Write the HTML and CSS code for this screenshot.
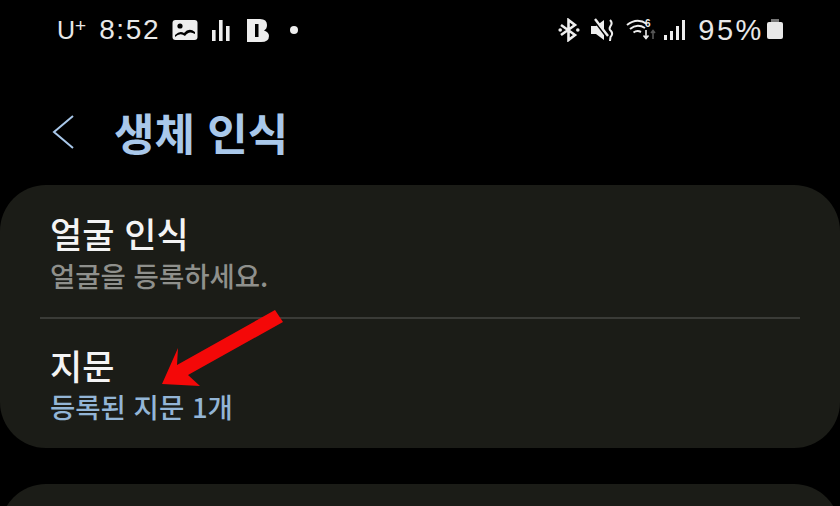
FILE: index.html
```html
<!DOCTYPE html>
<html lang="ko">
<head>
    <meta charset="UTF-8">
    <meta name="viewport" content="width=device-width, initial-scale=1.0">
    <title>생체 인식</title>
    <link rel="stylesheet" href="styles.css">
</head>
<body>

    <!-- Status bar -->
    <div class="status-bar">
        <div class="status-group">
            <span class="carrier">U<sup>+</sup></span>
            <span class="clock">8:52</span>
            <svg class="icon-gallery" width="26" height="22" viewBox="0 0 26 22">
                <rect x="0.5" y="1" width="25" height="20" rx="3" fill="#eee"/>
                <circle cx="8" cy="7" r="2.6" fill="#000"/>
                <path d="M3 18 L3 16 Q8 11 12 14 Q17 8 23 13 L23 15 Q17 11 13 17 Q8 13 3 18 Z" fill="#000"/>
            </svg>
            <svg class="icon-bars" width="18" height="22" viewBox="0 0 18 22">
                <rect x="0" y="11" width="3.6" height="11" fill="#eee"/>
                <rect x="7" y="1" width="3.6" height="21" fill="#eee"/>
                <rect x="14" y="7" width="3.6" height="15" fill="#eee"/>
            </svg>
            <svg class="icon-b" width="22" height="23" viewBox="0 0 22 23">
                <path d="M0 0 H13 Q20 0 20 6 Q20 10 17 11.5 Q22 13 22 17 Q22 23 14 23 H0 Z" fill="#eee"/>
                <rect x="8" y="5" width="3.5" height="13" fill="#000"/>
            </svg>
            <span class="dot"></span>
        </div>
        <div class="status-group">
            <svg class="icon-bt" width="22" height="24" viewBox="0 0 22 24">
                <path d="M3 7 L17 17 L10.5 22 V2 L17 7 L3 17" fill="none" stroke="#eee" stroke-width="2.6"/>
                <circle cx="2.2" cy="12" r="1.8" fill="#eee"/>
                <circle cx="19.8" cy="12" r="1.8" fill="#eee"/>
            </svg>
            <svg class="icon-mute" width="24" height="24" viewBox="0 0 24 24">
                <path d="M0 8 H5 L13 2 V22 L5 16 H0 Z" fill="#eee"/>
                <path d="M2 1 L17 21" stroke="#000" stroke-width="2"/>
                <path d="M4 1 L17 18" stroke="#eee" stroke-width="2.4"/>
                <path d="M19 2 Q22 5 19.5 8 Q17.5 11 20 13 Q22.5 16 19.5 19 L19 23" fill="none" stroke="#eee" stroke-width="2"/>
            </svg>
            <svg class="icon-wifi" width="30" height="24" viewBox="0 0 30 24">
                <path d="M1 7 Q11 -1 21 6" fill="none" stroke="#eee" stroke-width="2"/>
                <path d="M4 11 Q11 5 19 10" fill="none" stroke="#eee" stroke-width="2"/>
                <path d="M7.5 14.5 Q11 12 15 14" fill="none" stroke="#eee" stroke-width="2"/>
                <text x="19" y="9" class="wifi-six">6</text>
                <path d="M20 12 V20 M17.5 17.5 L20 20.5 L22.5 17.5" fill="none" stroke="#eee" stroke-width="1.6"/>
                <path d="M27 21 V13 M25 15 L27 12.5 L29 15" fill="none" stroke="#555" stroke-width="1.6"/>
            </svg>
            <svg class="icon-signal" width="22" height="20" viewBox="0 0 22 20">
                <rect x="0" y="15" width="3" height="5" fill="#eee"/>
                <rect x="6" y="11" width="3" height="9" fill="#eee"/>
                <rect x="12" y="6" width="3" height="14" fill="#eee"/>
                <rect x="18" y="0" width="3" height="20" fill="#eee"/>
            </svg>
            <span class="battery-text">95%</span>
            <span class="battery"></span>
        </div>
    </div>

    <!-- Header -->
    <div class="page-header">
        <svg class="back" width="22" height="34" viewBox="0 0 22 34">
            <path d="M21 1 L2 17 L21 33" fill="none" stroke="#a9c8ea" stroke-width="2"/>
        </svg>
        <h1>생체 인식</h1>
    </div>

    <!-- Settings card -->
    <div class="card">
        <div class="row">
            <div class="row-title">얼굴 인식</div>
            <div class="row-sub row-sub-grey">얼굴을 등록하세요.</div>
        </div>
        <div class="divider"></div>
        <div class="row">
            <div class="row-title">지문</div>
            <div class="row-sub row-sub-blue">등록된 지문 1개</div>
        </div>
    </div>

    <!-- Next card, only its top shows -->
    <div class="card-clip">
        <div class="card"></div>
    </div>

    <!-- Red arrow pasted over the shot -->
    <svg class="arrow" width="840" height="506" viewBox="0 0 840 506">
        <polygon points="162,384 178,348 177,365 275,310 283,322 188,375 200,386" fill="#f40808"/>
    </svg>

</body>
</html>
```

FILE: styles.css
```css
/* Body */
body {
    margin: 0;
    width: 840px;
    height: 506px;
    overflow: hidden;
    background-color: #000;
    color: #f2f2f2;
    font-family: "Liberation Sans", "Noto Sans CJK KR", sans-serif;
    position: relative;
}

/* Status bar */
.status-bar {
    display: flex;
    justify-content: space-between;
    align-items: center;
    height: 60px;
    padding: 0 57px;
}

.status-group {
    display: flex;
    align-items: center;
}

.carrier {
    font-size: 25px;
    color: #e8e8e8;
    margin-right: 13px;
}

.carrier sup {
    font-size: 19px;
    line-height: 0;
    vertical-align: 7px;
}

.clock {
    font-size: 28px;
    letter-spacing: 1.6px;
    color: #e8e8e8;
    margin-right: 12px;
}

.icon-gallery { margin-right: 14px; }
.icon-bars { margin-right: 17px; }
.icon-b { margin-right: 21px; }

.dot {
    width: 8px;
    height: 8px;
    border-radius: 50%;
    background-color: #eee;
}

.icon-bt { margin-right: 11px; }
.icon-mute { margin-right: 11px; }
.icon-wifi { margin-right: 8px; }
.icon-signal { margin-right: 12px; }

.wifi-six {
    font-size: 10px;
    font-weight: bold;
    fill: #eee;
}

.battery-text {
    font-size: 29px;
    letter-spacing: 2.6px;
    color: #e8e8e8;
    margin-right: 3px;
}

.battery {
    width: 16px;
    height: 17px;
    background-color: #e8e8e8;
    border-radius: 2px;
    position: relative;
}

.battery::before {
    content: "";
    position: absolute;
    top: -3px;
    left: 4px;
    width: 8px;
    height: 3px;
    background-color: #777;
}

/* Header */
.page-header {
    display: flex;
    align-items: center;
    box-sizing: border-box;
    height: 125px;
    padding: 18px 0 0 52px;
}

.back {
    margin-right: 40px;
}

h1 {
    margin: 0;
    font-size: 44px;
    font-weight: bold;
    color: #a9c8ea;
}

/* Cards */
.card {
    background-color: #1b1c17;
    border-radius: 46px;
    height: 263px;
    box-sizing: border-box;
    padding: 25px 40px 0;
    margin-bottom: 36px;
}

.card-clip {
    height: 22px;
    overflow: hidden;
}

.row {
    padding: 0 10px;
    font-family: "Noto Sans CJK KR", "Liberation Sans", sans-serif;
}

.row-title {
    font-size: 35px;
    font-weight: 500;
    line-height: 46px;
    color: #f4f4f4;
}

.row-sub {
    font-size: 27.5px;
    font-weight: 500;
    line-height: 36px;
}

.row-sub-grey {
    margin-top: 1px;
    color: #8f908c;
}

.row-sub-blue {
    color: #93b5d6;
}

.divider {
    height: 2px;
    background-color: #3a3b37;
    margin: 24px 0 23px;
}

.arrow {
    position: absolute;
    top: 0;
    left: 0;
}
```
